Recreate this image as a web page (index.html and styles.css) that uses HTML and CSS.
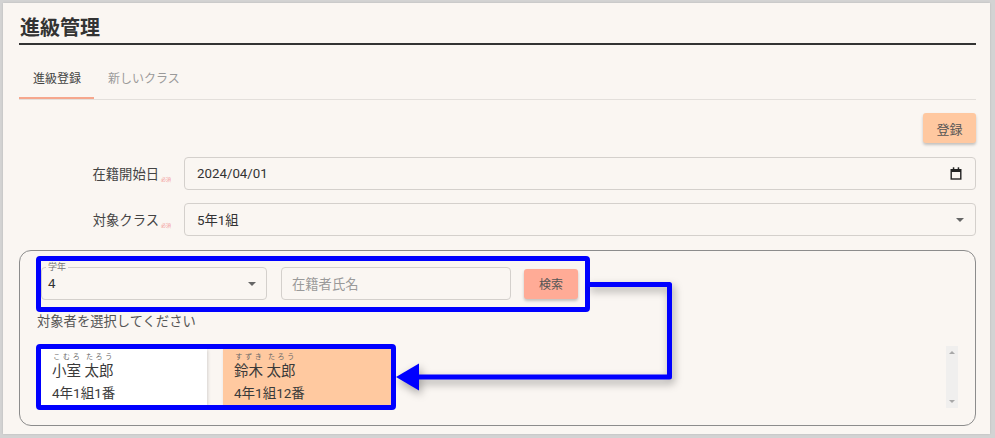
FILE: index.html
```html
<!DOCTYPE html>
<html lang="ja">
<head>
<meta charset="utf-8">
<title>進級管理</title>
<link rel="stylesheet" href="styles.css">
</head>
<body>
<div class="frame">
  <h1 class="title">進級管理</h1>
  <div class="tabs">
    <div class="tab active">進級登録</div>
    <div class="tab">新しいクラス</div>
  </div>
  <div class="actions"><button class="btn btn-register">登録</button></div>
  <div class="form-row">
    <label class="form-label">在籍開始日<span class="req">必須</span></label>
    <div class="field">
      <span class="field-value">2024/04/01</span>
      <svg class="cal" width="12" height="13" viewBox="0 0 12 13"><rect x="1.2" y="2.7" width="9.6" height="9.3" fill="none" stroke="#222" stroke-width="1.4"/><rect x="1" y="2" width="10" height="3" fill="#222"/><rect x="2.8" y="0.3" width="1.5" height="2.6" fill="#222"/><rect x="7.7" y="0.3" width="1.5" height="2.6" fill="#222"/></svg>
    </div>
  </div>
  <div class="form-row second">
    <label class="form-label">対象クラス<span class="req">必須</span></label>
    <div class="field">
      <span class="field-value">5年1組</span>
      <span class="caret"></span>
    </div>
  </div>
  <div class="group">
    <div class="search-row">
      <div class="field grade">
        <span class="float-label">学年</span>
        <span class="field-value">4</span>
        <span class="caret"></span>
      </div>
      <div class="field name-input"><span class="placeholder">在籍者氏名</span></div>
      <button class="btn btn-search">検索</button>
    </div>
    <div class="hint">対象者を選択してください</div>
    <div class="list">
      <div class="cards">
        <div class="card">
          <div class="name"><ruby>小室<rt>こむろ</rt></ruby> <ruby>太郎<rt>たろう</rt></ruby></div>
          <div class="number">4年1組1番</div>
        </div>
        <div class="card selected">
          <div class="name"><ruby>鈴木<rt>すずき</rt></ruby> <ruby>太郎<rt>たろう</rt></ruby></div>
          <div class="number">4年1組12番</div>
        </div>
      </div>
      <div class="scrollbar"><span class="sb-up"></span><span class="sb-down"></span></div>
    </div>
  </div>
</div>

<div class="annot annot-search"></div>
<div class="annot annot-cards"></div>
<svg class="connector" width="995" height="438" viewBox="0 0 995 438">
  <path d="M588 284.5 H669.5 V377 H414" fill="none" stroke="#0000ff" stroke-width="5" stroke-linejoin="round"/>
  <polygon points="396,377 419,363.5 419,390.5" fill="#0000ff"/>
</svg>
</body>
</html>
```

FILE: styles.css
```css
* { box-sizing: border-box; }

html, body {
  margin: 0;
  padding: 0;
}

body {
  width: 995px;
  height: 438px;
  background: #d3d3d3;
  font-family: Roboto, "Noto Sans CJK JP", sans-serif;
  color: #333;
  position: relative;
  overflow: hidden;
}

.frame {
  margin: 3px 5px 0 3px;
  width: 987px;
  height: 431px;
  background: #faf6f2;
  padding: 12px 14px 0 16px;
  box-shadow: 0 0 2px rgba(0, 0, 0, 0.12);
}

.title {
  margin: 0;
  font-size: 20px;
  line-height: 26px;
  font-weight: 700;
  color: #333;
  padding: 0 0 2px 1px;
  border-bottom: 2px solid #333;
}

.tabs {
  display: flex;
  border-bottom: 1px solid #e3dfdb;
}

.tab {
  padding: 26px 13px 10px 14px;
  font-size: 12px;
  line-height: 16px;
  color: #9a9a9a;
  border-bottom: 2px solid transparent;
}

.tab.active {
  color: #444;
  border-bottom-color: #f6a78d;
}

.actions {
  display: flex;
  justify-content: flex-end;
  margin-top: 13px;
}

.btn {
  border: none;
  border-radius: 3px;
  font-family: Roboto, "Noto Sans CJK JP", sans-serif;
  color: #555;
  padding: 0;
  box-shadow: 0 2px 3px rgba(0, 0, 0, 0.22);
}

.btn-register {
  width: 53px;
  height: 30px;
  font-size: 13px;
  background: #ffc8a0;
}

.form-row {
  display: grid;
  grid-template-columns: 152px 1fr;
  column-gap: 13px;
  align-items: center;
  margin-top: 14px;
}

.form-row.second {
  margin-top: 13px;
}

.form-label {
  text-align: right;
  font-size: 13.3px;
  color: #444;
}

.req {
  font-size: 5px;
  color: #f29a9a;
  margin-left: 2px;
  vertical-align: -2px;
}

.field {
  height: 33px;
  border: 1px solid #d4d0cc;
  border-radius: 4px;
  display: flex;
  align-items: center;
  padding: 0 13px 0 12px;
  font-size: 13.3px;
  color: #333;
  position: relative;
}

.field-value {
  flex: 1;
}

.cal {
  display: block;
}

.caret {
  width: 0;
  height: 0;
  border-left: 4.5px solid transparent;
  border-right: 4.5px solid transparent;
  border-top: 4.5px solid #666;
  margin-right: -2px;
}

.group {
  margin-top: 14px;
  height: 176px;
  border: 1px solid #8c8c8c;
  border-radius: 12px;
  padding: 16px 16px 0 17px;
}

.search-row {
  display: flex;
  align-items: center;
}

.grade {
  margin-left: 4px;
  width: 226px;
  padding: 0 12px 0 6px;
}

.float-label {
  position: absolute;
  top: -6px;
  left: 4px;
  font-size: 9px;
  line-height: 10px;
  padding: 0 2px;
  color: #777;
  background: #faf6f2;
}

.name-input {
  margin-left: 14px;
  width: 230px;
  padding-left: 10px;
}

.placeholder {
  color: #9a9a9a;
}

.btn-search {
  margin-left: 13px;
  width: 54px;
  height: 30px;
  font-size: 12px;
  background: #ffab96;
}

.hint {
  margin-top: 13px;
  font-size: 13.3px;
  line-height: 18px;
  color: #555;
}

.list {
  margin-top: 15px;
  height: 62px;
  display: flex;
}

.cards {
  display: flex;
  gap: 16px;
  padding-top: 3px;
  margin-left: 4px;
}

.card {
  width: 166px;
  height: 56px;
  background: #fff;
  padding: 0 11px;
  box-shadow: 1px 1px 3px rgba(0, 0, 0, 0.15);
}

.card.selected {
  width: 168px;
  background: #ffc9a0;
}

.name {
  font-size: 14.5px;
  line-height: 18px;
  padding-top: 14px;
  color: #3a3a3a;
}

.name rt {
  font-size: 7px;
  line-height: 8px;
  color: #666;
  padding-bottom: 2px;
}

.number {
  font-size: 13.5px;
  line-height: 18px;
  margin-top: 3px;
  color: #3a3a3a;
}

.scrollbar {
  margin-left: auto;
  margin-right: 1px;
  width: 12px;
  height: 62px;
  background: #f0efee;
  display: flex;
  flex-direction: column;
  justify-content: space-between;
  align-items: center;
  padding: 5px 0;
}

.sb-up, .sb-down {
  width: 0;
  height: 0;
  border-left: 3px solid transparent;
  border-right: 3px solid transparent;
}

.sb-up { border-bottom: 3px solid #a8a8a8; }
.sb-down { border-top: 3px solid #a8a8a8; }

/* Annotation overlays */
.annot {
  position: absolute;
  border: 5px solid #0000ff;
  border-radius: 4px;
  pointer-events: none;
}

.annot-search {
  left: 36px;
  top: 256px;
  width: 554px;
  height: 56px;
}

.annot-cards {
  left: 36px;
  top: 344px;
  width: 360px;
  height: 66px;
}

.connector {
  position: absolute;
  left: 0;
  top: 0;
  pointer-events: none;
  filter: drop-shadow(2px 4px 4px rgba(0, 0, 0, 0.35));
}
```
